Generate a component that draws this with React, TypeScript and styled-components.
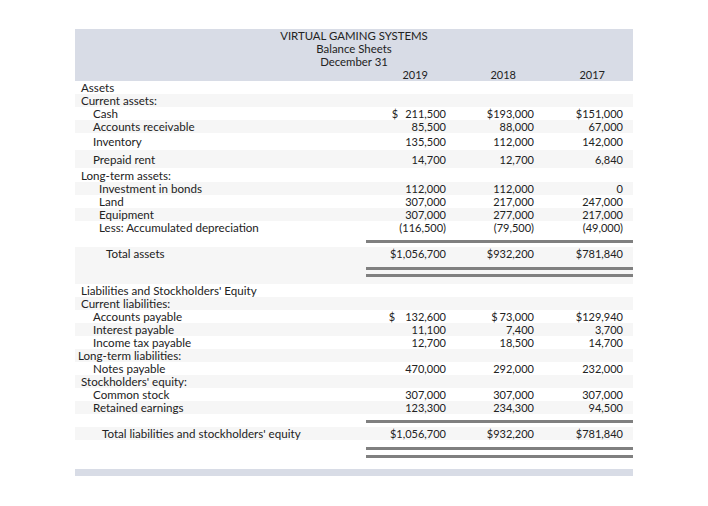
import React from 'react';
import styled, { createGlobalStyle } from 'styled-components';

const Global = createGlobalStyle`
  html, body { margin: 0; padding: 0; background: #ffffff; }
  body { font-family: Lato, "Open Sans", "Liberation Sans", sans-serif; }
`;

const COLS = '291px 90px 88px 89px';

const Page = styled.div`
  box-sizing: border-box;
  width: 708px;
  height: 506px;
  padding: 29px 0 0 75px;
`;

const Sheet = styled.div`
  width: 558px;
  font-size: 11px;
  line-height: 13px;
  color: #222222;
`;

const HeaderBand = styled.div`
  background: #d8dce6;
  height: 52px;
`;

const TitleLine = styled.div`
  height: 13px;
  text-align: center;
  font-size: 11.4px;
`;

const YearRow = styled.div`
  display: grid;
  grid-template-columns: ${COLS};
  height: 13px;
`;

const Year = styled.div`
  text-align: right;
  padding-right: 28px;
`;

const Row = styled.div<{ $h?: number; $shade?: boolean }>`
  display: grid;
  grid-template-columns: ${COLS};
  height: ${(p) => p.$h ?? 13}px;
  align-items: center;
  background: ${(p) => (p.$shade ? '#f6f6f6' : 'transparent')};
`;

const Label = styled.div<{ $indent: number }>`
  padding-left: ${(p) => p.$indent}px;
  white-space: nowrap;
  font-size: 11.6px;
`;

const Num = styled.div`
  text-align: right;
  padding-right: 10px;
  white-space: nowrap;
`;

const Dollar = styled.span<{ $gap: number }>`
  margin-right: ${(p) => p.$gap}px;
`;

const RuleRow = styled.div<{ $h: number; $shade?: boolean; $top: number; $gap?: number }>`
  display: grid;
  grid-template-columns: ${COLS};
  height: ${(p) => p.$h}px;
  background: ${(p) => (p.$shade ? '#f6f6f6' : 'transparent')};
  padding-top: ${(p) => p.$top}px;
  box-sizing: border-box;
  align-content: start;
  row-gap: ${(p) => p.$gap ?? 0}px;
`;

const Rule = styled.div`
  grid-column: 2 / 5;
  height: 3px;
  background: #808080;
`;

const FooterBand = styled.div`
  background: #d8dce6;
  height: 7px;
`;

type Val = string | { d: string; gap: number };

type Line = {
  label: string;
  indent: number;
  h?: number;
  shade?: boolean;
  vals?: [Val, Val, Val];
};

const renderVal = (v: Val) =>
  typeof v === 'string' ? (
    v
  ) : (
    <>
      <Dollar $gap={v.gap}>$</Dollar>
      {v.d}
    </>
  );

const assets: Line[] = [
  { label: 'Assets', indent: 6 },
  { label: 'Current assets:', indent: 6, shade: true },
  { label: 'Cash', indent: 18, vals: [{ d: '211,500', gap: 7 }, '$193,000', '$151,000'] },
  { label: 'Accounts receivable', indent: 18, shade: true, vals: ['85,500', '88,000', '67,000'] },
  { label: 'Inventory', indent: 18, h: 17, vals: ['135,500', '112,000', '142,000'] },
  { label: 'Prepaid rent', indent: 18, h: 18, shade: true, vals: ['14,700', '12,700', '6,840'] },
  { label: 'Long-term assets:', indent: 6, h: 14 },
  { label: 'Investment in bonds', indent: 24, shade: true, vals: ['112,000', '112,000', '0'] },
  { label: 'Land', indent: 24, vals: ['307,000', '217,000', '247,000'] },
  { label: 'Equipment', indent: 24, shade: true, vals: ['307,000', '277,000', '217,000'] },
  { label: 'Less: Accumulated depreciation', indent: 24, vals: ['(116,500)', '(79,500)', '(49,000)'] },
];

const liabilities: Line[] = [
  { label: "Liabilities and Stockholders' Equity", indent: 6 },
  { label: 'Current liabilities:', indent: 6, shade: true },
  { label: 'Accounts payable', indent: 18, vals: [{ d: '132,600', gap: 10 }, { d: '73,000', gap: 2 }, '$129,940'] },
  { label: 'Interest payable', indent: 18, shade: true, vals: ['11,100', '7,400', '3,700'] },
  { label: 'Income tax payable', indent: 18, vals: ['12,700', '18,500', '14,700'] },
  { label: 'Long-term liabilities:', indent: 3, shade: true },
  { label: 'Notes payable', indent: 18, vals: ['470,000', '292,000', '232,000'] },
  { label: "Stockholders' equity:", indent: 6, shade: true },
  { label: 'Common stock', indent: 18, vals: ['307,000', '307,000', '307,000'] },
  { label: 'Retained earnings', indent: 18, shade: true, vals: ['123,300', '234,300', '94,500'] },
];

const LineRow = ({ line }: { line: Line }) => (
  <Row $h={line.h} $shade={line.shade}>
    <Label $indent={line.indent}>{line.label}</Label>
    {line.vals ? (
      line.vals.map((v, i) => <Num key={i}>{renderVal(v)}</Num>)
    ) : (
      <>
        <Num />
        <Num />
        <Num />
      </>
    )}
  </Row>
);

export default function App() {
  return (
    <Page>
      <Global />
      <Sheet>
        <HeaderBand>
          <TitleLine>VIRTUAL GAMING SYSTEMS</TitleLine>
          <TitleLine>Balance Sheets</TitleLine>
          <TitleLine>December 31</TitleLine>
          <YearRow>
            <div />
            <Year>2019</Year>
            <Year>2018</Year>
            <Year>2017</Year>
          </YearRow>
        </HeaderBand>

        {assets.map((l) => (
          <LineRow key={l.label} line={l} />
        ))}
        <RuleRow $h={13} $top={6}>
          <Rule />
        </RuleRow>
        <Row $shade>
          <Label $indent={31}>Total assets</Label>
          <Num>$1,056,700</Num>
          <Num>$932,200</Num>
          <Num>$781,840</Num>
        </Row>
        <RuleRow $h={24} $top={7} $gap={4} $shade>
          <Rule />
          <Rule />
        </RuleRow>

        {liabilities.map((l) => (
          <LineRow key={l.label} line={l} />
        ))}
        <RuleRow $h={13} $top={6}>
          <Rule />
        </RuleRow>
        <Row $shade>
          <Label $indent={27}>Total liabilities and stockholders' equity</Label>
          <Num>$1,056,700</Num>
          <Num>$932,200</Num>
          <Num>$781,840</Num>
        </Row>
        <RuleRow $h={29} $top={7} $gap={5}>
          <Rule />
          <Rule />
        </RuleRow>
        <FooterBand />
      </Sheet>
    </Page>
  );
}
